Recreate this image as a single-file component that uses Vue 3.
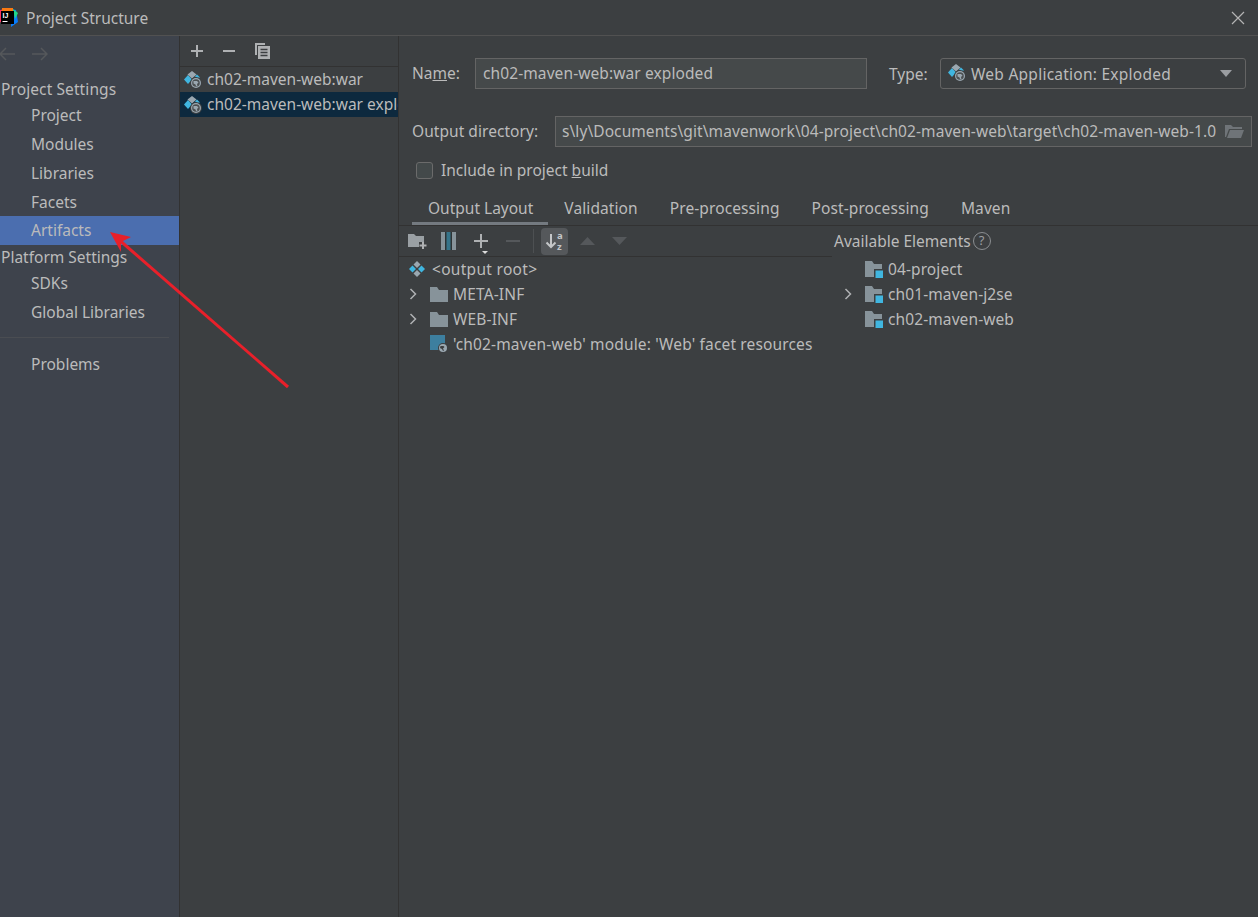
<template>
  <div class="win">
    <svg class="defs" width="0" height="0">
      <symbol id="artifact" viewBox="0 0 18 18">
        <path d="M4 4 8 8.500 4 13 0 8.500Z" fill="#40b6e0" />
        <path d="M8 0 12.500 3.500 8 7.500 3.500 3.500Z" fill="#9aa7b0" />
        <path d="M13 3.500 16 6.500 13 7 11 5.500Z" fill="#40b6e0" />
        <circle cx="12" cy="12" r="6" fill="#3c3f41" />
        <circle cx="12" cy="12" r="5" fill="#9aa7b0" />
        <circle cx="12" cy="12" r="3.800" fill="#4c5052" />
        <path d="M9.500 10h3.500l1.500 1.500-1.500 1.500.5 2.500-1.500-.5-.5-1.500-2-1Z" fill="#9aa7b0" />
      </symbol>
      <symbol id="folder" viewBox="0 0 18 16">
        <path d="M0 1h7l2 3h9v12H0Z" fill="#87939a" />
      </symbol>
      <symbol id="module" viewBox="0 0 18 18">
        <path d="M0 1h7l2 3h8v13H0Z" fill="#87939a" />
        <rect x="9" y="9" width="9" height="9" fill="#3c3f41" />
        <rect x="10.500" y="10.500" width="7.500" height="7.500" fill="#40b6e0" />
      </symbol>
      <symbol id="chev" viewBox="0 0 10 14">
        <path d="M2.500 2 7.500 7 2.500 12" fill="none" stroke="#afb1b3" stroke-width="1.500" />
      </symbol>
    </svg>

    <header class="titlebar">
      <svg class="logo" width="18" height="19" viewBox="0 0 18 19">
        <path d="M0 2 5 1 5 16 0 14Z" fill="#fe315d" />
        <path d="M11 1 16 2 18 14 11 19Z" fill="#087cfa" />
        <path d="M2 0h11v4H2Z" fill="#f97a12" />
        <path d="M13 1 18 5 15 11Z" fill="#21d789" />
        <rect x="1" y="3" width="13" height="13" fill="#000" />
        <text x="2.500" y="10" class="logo-txt">IJ</text>
        <rect x="2.500" y="13" width="5" height="1" fill="#fff" />
      </svg>
      <span class="title">Project Structure</span>
      <svg class="close" width="14" height="14" viewBox="0 0 14 14">
        <path d="M1 1 13 13M13 1 1 13" stroke="#b4b4b4" stroke-width="1.200" />
      </svg>
    </header>

    <div class="content">
      <aside class="sidebar">
        <div class="nav-arrows">
          <svg width="17" height="14" viewBox="0 0 17 14"><path d="M16 7H1M7 1 1 7l6 6" fill="none" stroke="#55585b" stroke-width="1.500" /></svg>
          <svg width="17" height="14" viewBox="0 0 17 14"><path d="M1 7h15M10 1l6 6-6 6" fill="none" stroke="#55585b" stroke-width="1.500" /></svg>
        </div>
        <div class="group-title first">Project Settings</div>
        <div v-for="item in projectItems" :key="item" class="side-item" :class="{ active: item === 'Artifacts' }">{{ item }}</div>
        <div class="group-title">Platform Settings</div>
        <div v-for="item in platformItems" :key="item" class="side-item">{{ item }}</div>
        <div class="side-sep"></div>
        <div class="side-item">Problems</div>
      </aside>

      <section class="middle">
        <div class="mid-toolbar">
          <svg width="14" height="14" viewBox="0 0 14 14"><path d="M7 1v12M1 7h12" stroke="#afb1b3" stroke-width="2" /></svg>
          <svg width="14" height="14" viewBox="0 0 14 14"><path d="M1 7h12" stroke="#afb1b3" stroke-width="2" /></svg>
          <svg width="16" height="18" viewBox="0 0 16 18">
            <path d="M1 1h10v2H3v10H1Z" fill="#afb1b3" />
            <path d="M4 4h12v13H4Z" fill="#afb1b3" />
            <path d="M6.500 7.500h7M6.500 10.500h7M6.500 13.500h7" stroke="#3c3f41" stroke-width="1.300" />
          </svg>
        </div>
        <div class="art-row"><svg class="ic18" width="18" height="18"><use href="#artifact" /></svg><span>ch02-maven-web:war</span></div>
        <div class="art-row selected"><svg class="ic18" width="18" height="18"><use href="#artifact" /></svg><span>ch02-maven-web:war exploded</span></div>
      </section>

      <main class="detail">
        <div class="form">
          <div class="row name-row">
            <label class="name-label">Na<u>m</u>e:</label>
            <div class="input name-input">ch02-maven-web:war exploded</div>
            <label class="type-label">Type:</label>
            <div class="combo">
              <svg class="ic18" width="18" height="18"><use href="#artifact" /></svg>
              <span class="combo-text">Web Application: Exploded</span>
              <svg class="caret" width="12" height="7" viewBox="0 0 12 7"><path d="M0 0h12L6 7Z" fill="#9a9da1" /></svg>
            </div>
          </div>
          <div class="row out-row">
            <label class="out-label">Output directory:</label>
            <div class="input out-input">
              <span class="out-text">s\ly\Documents\git\mavenwork\04-project\ch02-maven-web\target\ch02-maven-web-1.0</span>
              <svg width="19" height="14" viewBox="0 0 19 14"><path d="M0 1h6l2 2h9v2H4L1 13H0Z" fill="#6f7478" /><path d="M5 6h14l-3 8H2Z" fill="#6f7478" /></svg>
            </div>
          </div>
          <div class="row check-row">
            <span class="checkbox"></span>
            <span>Include in project <u>b</u>uild</span>
          </div>
        </div>

        <nav class="tabs">
          <div v-for="(t, i) in tabs" :key="t" class="tab" :class="{ on: i === 0 }">{{ t }}</div>
        </nav>

        <div class="panes">
          <div class="left-pane">
            <div class="layout-toolbar">
              <svg width="19" height="16" viewBox="0 0 19 16">
                <path d="M0 1h6l2 2h8v6h-5v5H0Z" fill="#9aa0a4" />
                <path d="M15 9v7M11.500 12.500h7" stroke="#afb1b3" stroke-width="2" />
              </svg>
              <svg class="zip" width="15" height="18" viewBox="0 0 15 18">
                <rect width="15" height="18" fill="#87939a" />
                <rect x="4" width="7" height="18" fill="#2d3335" />
                <path d="M5.500 1h4M5.500 3h4M5.500 5h4M5.500 7h4M5.500 9h4M5.500 11h4M5.500 13h4M5.500 15h4M5.500 17h4" stroke="#40b6e0" />
              </svg>
              <span class="add-btn">
                <svg width="14" height="14" viewBox="0 0 14 14"><path d="M7 0v14M0 7h14" stroke="#afb1b3" stroke-width="2" /></svg>
                <svg class="add-caret" width="6" height="3" viewBox="0 0 6 3"><path d="M0 0h6L3 3Z" fill="#ddd" /></svg>
              </span>
              <svg class="minus" width="14" height="2" viewBox="0 0 14 2"><path d="M0 1h14" stroke="#55585b" stroke-width="2" /></svg>
              <span class="tb-sep"></span>
              <span class="sort-btn">
                <svg width="22" height="22" viewBox="0 0 22 22">
                  <path d="M7 4v13M2.500 12.500 7 17l4.500-4.500" fill="none" stroke="#c4c6c8" stroke-width="2" />
                  <text x="13" y="8.500" class="sort-txt">a</text>
                  <text x="13" y="20" class="sort-txt">z</text>
                </svg>
              </span>
              <svg class="tri" width="15" height="8" viewBox="0 0 15 8"><path d="M7.500 0 15 8H0Z" fill="#55585b" /></svg>
              <svg class="tri" width="15" height="8" viewBox="0 0 15 8"><path d="M0 0h15L7.500 8Z" fill="#55585b" /></svg>
            </div>
            <div class="tree">
              <div class="tree-row root">
                <svg width="18" height="18" viewBox="0 0 18 18">
                  <path d="M9 1l3.500 3.500L9 8 5.500 4.500Z" fill="#9aa7b0" />
                  <path d="M4.500 5.500 8 9l-3.500 3.500L1 9Z" fill="#40b6e0" />
                  <path d="M13.500 5.500 17 9l-3.500 3.500L10 9Z" fill="#40b6e0" />
                  <path d="M9 10l3.500 3.500L9 17l-3.500-3.500Z" fill="#9aa7b0" />
                </svg>
                <span>&lt;output root&gt;</span>
              </div>
              <div class="tree-row"><svg class="chev" width="10" height="14"><use href="#chev" /></svg><svg width="18" height="16"><use href="#folder" /></svg><span>META-INF</span></div>
              <div class="tree-row"><svg class="chev" width="10" height="14"><use href="#chev" /></svg><svg width="18" height="16"><use href="#folder" /></svg><span>WEB-INF</span></div>
              <div class="tree-row facet">
                <svg width="18" height="18" viewBox="0 0 18 18">
                  <rect x="0" y="0" width="15" height="15" fill="#3d7f9f" />
                  <circle cx="13" cy="13" r="5" fill="#3c3f41" />
                  <circle cx="13" cy="13" r="4" fill="#9aa7b0" />
                  <path d="M10.500 11h3l1 1-1.500 1.500 1 2-1 .5-1-2-2-1Z" fill="#3c3f41" />
                </svg>
                <span>'ch02-maven-web' module: 'Web' facet resources</span>
              </div>
            </div>
          </div>
          <div class="right-pane">
            <div class="avail-head">
              <span>Available Elements</span>
              <span class="help">?</span>
            </div>
            <div class="avail-row"><svg width="18" height="18"><use href="#module" /></svg><span>04-project</span></div>
            <div class="avail-row"><svg class="chev" width="10" height="14"><use href="#chev" /></svg><svg width="18" height="18"><use href="#module" /></svg><span>ch01-maven-j2se</span></div>
            <div class="avail-row"><svg width="18" height="18"><use href="#module" /></svg><span>ch02-maven-web</span></div>
          </div>
        </div>
      </main>
    </div>

    <!-- red annotation drawn over the dialog -->
    <svg class="annotation" width="200" height="180" viewBox="0 0 200 180">
      <path d="M7 6 178 155" stroke="#e8202a" stroke-width="3" />
      <path d="M0 0 21 5 11 10 11 20Z" fill="#e8202a" />
    </svg>
  </div>
</template>

<script setup>
const projectItems = ['Project', 'Modules', 'Libraries', 'Facets', 'Artifacts']
const platformItems = ['SDKs', 'Global Libraries']
const tabs = ['Output Layout', 'Validation', 'Pre-processing', 'Post-processing', 'Maven']
</script>

<style>
html, body { margin: 0; background: #3c3f41; }
</style>

<style scoped>
.win {
  position: relative;
  width: 1258px;
  height: 917px;
  overflow: hidden;
  display: flex;
  flex-direction: column;
  background: #3c3f41;
  color: #bbbbbb;
  font-family: "Noto Sans", "Open Sans", sans-serif;
  font-size: 15.5px;
}
.defs { position: absolute; }
.titlebar {
  height: 35px;
  flex: none;
  display: flex;
  align-items: center;
  border-bottom: 1px solid #515151;
  box-sizing: content-box;
}
.logo { margin-top: -1px; flex: none; }
.logo-txt { font: 700 7px "Liberation Sans", sans-serif; fill: #fff; }
.title { margin-left: 8px; }
.close { margin-left: auto; margin-right: 13px; }
.content { flex: 1; display: flex; min-height: 0; }

.sidebar {
  width: 179px;
  flex: none;
  background: #3e434c;
  border-right: 1px solid #323232;
}
.nav-arrows { height: 36px; display: flex; align-items: center; gap: 15px; margin-left: -1px; }
.group-title { height: 24px; line-height: 24px; padding-left: 1px; }
.group-title.first { margin-top: 5px; letter-spacing: .1px; }
.side-item { height: 29px; line-height: 29px; padding-left: 31px; }
.side-item:has(+ .active) { height: 28px; }
.side-item.active { background: #4b6eaf; }
.side-sep { height: 1px; background: #4a4d52; margin: 10px 10px 12px 0; }

.middle {
  width: 218px;
  flex: none;
  overflow: hidden;
  border-right: 1px solid #323232;
}
.mid-toolbar {
  height: 30px;
  display: flex;
  align-items: center;
  gap: 18px;
  padding-left: 10px;
  border-bottom: 1px solid #323232;
}
.art-row {
  box-sizing: border-box;
  height: 25px;
  display: flex;
  align-items: center;
  gap: 5px;
  padding-left: 4px;
  white-space: nowrap;
}
.art-row span { margin-top: -2px; }
.art-row.selected { background: #0d293e; }
.ic18 { flex: none; }

.detail { flex: 1; min-width: 0; display: flex; flex-direction: column; }
.form { padding: 21px 6px 0 13px; }
.row { display: flex; align-items: center; }
.name-row { height: 32px; }
.name-label { width: 63px; flex: none; }
.input {
  box-sizing: border-box;
  background: #45494a;
  border: 1px solid #646464;
  height: 31px;
  display: flex;
  align-items: center;
  white-space: nowrap;
  letter-spacing: .1px;
}
.name-input { width: 392px; padding-left: 7px; }
.type-label { margin-left: 22px; width: 51px; flex: none; margin-top: 1px; }
.combo {
  box-sizing: border-box;
  width: 306px;
  height: 31px;
  border: 1px solid #646464;
  border-radius: 3px;
  display: flex;
  align-items: center;
  gap: 5px;
  padding-left: 7px;
}
.combo-text { letter-spacing: .25px; margin-top: 1px; }
.caret { margin-left: auto; margin-right: 13px; }
.out-row { margin-top: 26px; height: 32px; }
.out-label { width: 143px; flex: none; letter-spacing: .05px; }
.out-input { width: 697px; padding: 0 7px 0 6px; justify-content: space-between; letter-spacing: .08px; }
.check-row { margin-top: 7px; height: 32px; padding-left: 4px; gap: 8px; }
.checkbox {
  box-sizing: border-box;
  width: 17px;
  height: 17px;
  background: #43494a;
  border: 1px solid #6b6b6b;
  border-radius: 3px;
}
.tabs {
  display: flex;
  height: 29px;
  margin-top: 10px;
  padding-left: 13px;
  border-bottom: 1px solid #323232;
}
.tab { padding: 0 16px; line-height: 24px; white-space: nowrap; letter-spacing: .1px; }
.tab.on { box-shadow: inset 0 -3px 0 #747a80; letter-spacing: 0; padding-right: 15px; }

.panes { flex: 1; display: flex; min-height: 0; }
.left-pane { width: 433px; flex: none; }
.layout-toolbar {
  height: 30px;
  display: flex;
  align-items: center;
  padding-left: 9px;
  border-bottom: 1px solid #323232;
}
.zip { margin-left: 14px; }
.add-btn { position: relative; margin-left: 18px; display: flex; }
.add-caret { position: absolute; left: 8px; bottom: -6px; }
.minus { margin-left: 18px; }
.tb-sep { width: 1px; height: 24px; background: #4d5052; margin-left: 13px; }
.sort-btn {
  width: 27px;
  height: 27px;
  margin-left: 7px;
  border-radius: 4px;
  background: #55585b;
  display: flex;
  align-items: center;
  justify-content: center;
}
.sort-txt { font: 700 9.5px "Noto Sans", sans-serif; fill: #c4c6c8; }
.tri { margin-left: 12px; }
.tri:last-child { margin-left: 17px; }
.tree-row {
  height: 25px;
  display: flex;
  align-items: center;
  padding-left: 9px;
  white-space: nowrap;
  letter-spacing: .15px;
}
.tree-row .chev { margin-right: 12px; }
.tree-row svg + svg + span { margin-left: 5px; }
.root { gap: 6px; height: 24px; letter-spacing: .3px; }
.facet { padding-left: 31px; gap: 5px; }
.right-pane { flex: 1; }
.avail-head { height: 30px; display: flex; align-items: center; gap: 2px; padding-left: 2px; }
.help {
  box-sizing: border-box;
  width: 18px;
  height: 18px;
  border: 1.500px solid #8b8e91;
  border-radius: 50%;
  font-size: 13px;
  line-height: 15px;
  text-align: center;
  color: #9a9da0;
}
.avail-row {
  height: 25px;
  display: flex;
  align-items: center;
  padding-left: 33px;
  gap: 5px;
  white-space: nowrap;
  letter-spacing: .1px;
}
.avail-row .chev { margin-left: -22px; margin-right: 7px; }
.annotation { position: absolute; left: 110px; top: 232px; }
</style>
